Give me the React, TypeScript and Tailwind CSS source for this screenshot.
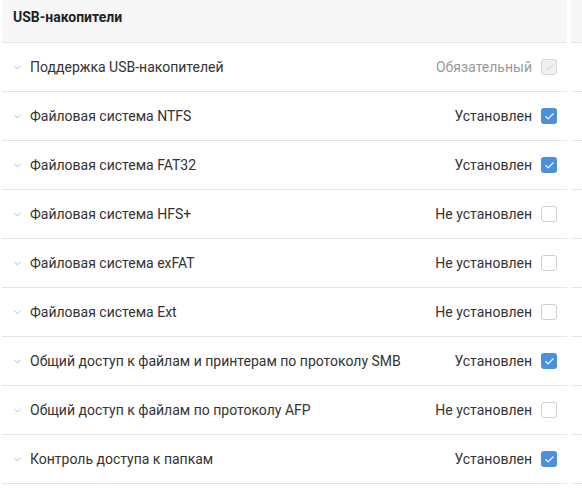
import { Check, ChevronDown } from "lucide-react";

type Status = "required" | "on" | "off";

interface Row {
  name: string;
  status: Status;
}

const rows: Row[] = [
  { name: "Поддержка USB-накопителей", status: "required" },
  { name: "Файловая система NTFS", status: "on" },
  { name: "Файловая система FAT32", status: "on" },
  { name: "Файловая система HFS+", status: "off" },
  { name: "Файловая система exFAT", status: "off" },
  { name: "Файловая система Ext", status: "off" },
  { name: "Общий доступ к файлам и принтерам по протоколу SMB", status: "on" },
  { name: "Общий доступ к файлам по протоколу AFP", status: "off" },
  { name: "Контроль доступа к папкам", status: "on" },
];

function Box({ status }: { status: Status }) {
  if (status === "required") {
    return (
      <span className="w-4 h-4 rounded-[3px] border border-[#d6d6d6] bg-[#f0f0f0] flex items-center justify-center">
        <Check size={11} strokeWidth={2} color="#c4c4c4" />
      </span>
    );
  }
  if (status === "on") {
    return (
      <span className="w-4 h-4 rounded-[3px] bg-[#4a8fe0] flex items-center justify-center">
        <Check size={11} strokeWidth={2.5} color="#ffffff" />
      </span>
    );
  }
  return <span className="w-4 h-4 rounded-[3px] border border-[#cfcfcf] bg-white" />;
}

function label(s: Status) {
  if (s === "required") return "Обязательный";
  if (s === "on") return "Установлен";
  return "Не установлен";
}

export default function App() {
  return (
    <div className="w-[582px] h-[488px] overflow-hidden bg-white flex pl-[2px] font-['Roboto',sans-serif] text-[14px] text-[#333]">
      <div className="w-[565px] shrink-0">
        <div className="h-[43px] bg-[#f7f7f7] border-b border-[#e6e6e6] pt-[9px] pl-[11px] leading-[16px] font-bold text-[#222]">
          USB-накопители
        </div>
        {rows.map((r) => (
          <div
            key={r.name}
            className="h-[49px] border-b border-[#e6e6e6] flex items-center pl-[10px] pr-[10px]"
          >
            <ChevronDown size={11} strokeWidth={1.5} color="#999" className="mr-[7px]" />
            <span className="flex-1">{r.name}</span>
            <span className={r.status === "required" ? "text-[#999] mr-[9px]" : "mr-[9px]"}>
              {label(r.status)}
            </span>
            <Box status={r.status} />
          </div>
        ))}
      </div>
      <div className="ml-[4px] flex-1">
        <div className="h-[43px] bg-[#f7f7f7] border-b border-[#e6e6e6]" />
        {rows.map((r) => (
          <div key={r.name} className="h-[49px] border-b border-[#e6e6e6]" />
        ))}
      </div>
    </div>
  );
}
